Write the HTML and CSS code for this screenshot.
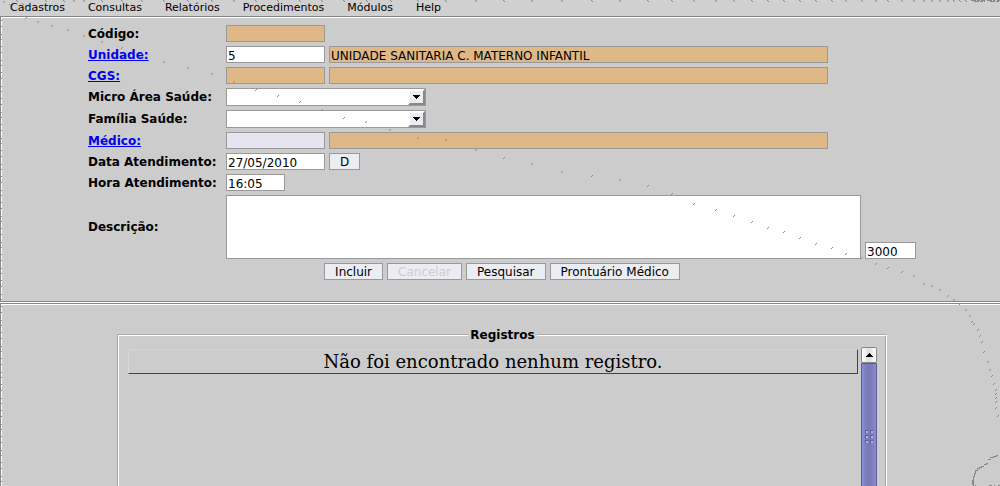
FILE: index.html
```html
<!DOCTYPE html>
<html lang="pt-BR">
<head>
<meta charset="utf-8">
<title>Atendimento</title>
<link rel="stylesheet" href="styles.css">
</head>
<body>
<nav class="menubar">
  <button type="button">Cadastros</button>
  <button type="button">Consultas</button>
  <button type="button">Relatórios</button>
  <button type="button">Procedimentos</button>
  <button type="button">Módulos</button>
  <button type="button">Help</button>
</nav>
<main class="frame">
  <form class="form">
    <div class="fields">
      <label for="codigo">Código:</label>
      <div class="row"><input id="codigo" class="locked short" readonly></div>
      <a href="#unidade">Unidade:</a>
      <div class="row"><input id="unidade" class="short" aria-label="Unidade" value="5"><input class="locked long" aria-label="Nome da unidade" readonly value="UNIDADE SANITARIA C. MATERNO INFANTIL"></div>
      <a href="#cgs">CGS:</a>
      <div class="row"><input id="cgs" class="locked short" aria-label="CGS" readonly><input class="locked long" aria-label="Nome do paciente" readonly></div>
      <label for="micro">Micro Área Saúde:</label>
      <div class="picker"><select id="micro"><option></option></select><span class="drop"><svg width="7" height="4" viewBox="0 0 7 4" aria-hidden="true"><path d="M0 0h7v1H6v1H5v1H4v1H3V3H2V2H1V1H0z"/></svg></span></div>
      <label for="familia">Família Saúde:</label>
      <div class="picker"><select id="familia"><option></option></select><span class="drop"><svg width="7" height="4" viewBox="0 0 7 4" aria-hidden="true"><path d="M0 0h7v1H6v1H5v1H4v1H3V3H2V2H1V1H0z"/></svg></span></div>
      <a href="#medico">Médico:</a>
      <div class="row"><input id="medico" class="current short" aria-label="Médico"><input class="locked long" aria-label="Nome do médico" readonly></div>
      <label for="data">Data Atendimento:</label>
      <div class="row"><input id="data" class="short" value="27/05/2010"><button type="button" class="btn">D</button></div>
      <label for="hora">Hora Atendimento:</label>
      <div class="row"><input id="hora" class="time" value="16:05"></div>
      <label for="descricao">Descrição:</label>
      <div class="row"><textarea id="descricao"></textarea><input class="count" aria-label="Caracteres restantes" value="3000"></div>
    </div>
    <div class="actions">
      <button type="button" class="btn">Incluir</button>
      <button type="button" class="btn" disabled>Cancelar</button>
      <button type="button" class="btn">Pesquisar</button>
      <button type="button" class="btn">Prontuário Médico</button>
    </div>
  </form>
</main>
<section class="frame results">
  <fieldset>
    <legend>Registros</legend>
    <div class="list">
      <p class="empty">Não foi encontrado nenhum registro.</p>
      <div class="scrollbar">
        <button type="button" class="up" aria-label="Rolar para cima"><svg width="7" height="4" viewBox="0 0 7 4" aria-hidden="true"><path d="M3 0h1v1h1v1h1v1h1v1H0V3h1V2h1V1h1z"/></svg></button>
        <div class="thumb">
          <svg width="8" height="13" viewBox="0 0 8 13" aria-hidden="true"><path fill="#5c5c9c" d="M0 0h3v3H0zM5 0h3v3H5zM0 5h3v3H0zM5 5h3v3H5zM0 10h3v3H0zM5 10h3v3H5z"/><path fill="#b0b0f0" d="M1 1h2v2H1zM6 1h2v2H6zM1 6h2v2H1zM6 6h2v2H6zM1 11h2v2H1zM6 11h2v2H6z"/></svg>
        </div>
      </div>
    </div>
  </fieldset>
</section>
<svg class="trail" width="1000" height="486" viewBox="0 0 1000 486" aria-hidden="true">
  <defs>
    <marker id="tick" markerUnits="userSpaceOnUse" markerWidth="2" markerHeight="2"><path d="M0 1h1v1H0zM1 0h1v1H1z"/></marker>
    <marker id="back" markerUnits="userSpaceOnUse" markerWidth="2" markerHeight="2"><path d="M0 0h1v1H0zM1 1h1v1H1z"/></marker>
  </defs>
  <polyline class="ticks" points="25,17 37,21 51,25 67,29 83,35 101,41 121,47 141,53 163,61 187,67 211,73 233,81 255,89 277,95 299,101 321,109 343,117 365,121 389,129 417,137 445,139 475,149 503,157 531,163 561,171 591,175 619,179 647,185 671,193 693,203 715,209 733,215 751,221 767,227 783,231 799,237 815,243 831,247 845,253 861,257 875,263 887,267 901,271 913,275 923,283 931,285 939,289 947,295 953,299 959,303 965,309 969,315 971,321 973,323 977,329 979,335 981,341 983,351 987,361 989,369 991,375 993,383 995,389 995,393 995,397 995,401 995,407 997,415"/>
  <polyline class="backs" points="3,1 9,4 16,0 22,3 28,6 45,0 63,0 73,0 83,0 101,0 121,0 141,0 163,0 187,0 211,0 233,0 255,0 277,0 299,0 321,0 343,0 366,0 390,0 417,0 445,0 475,0 503,0 531,0 561,0 591,0 619,0 647,0 671,0 693,0 715,0 733,0 751,0 767,0 783,0 799,0 815,0 831,0 845,0 861,0 875,0 887,0 901,0 913,0 923,0 931,0 939,0 947,0 953,0 959,0 965,0"/>
  <path class="edge" d="M970.500 .5h14M974 1.500h11M987 .5h8M990 1.500h10M997 .5h3" stroke-dasharray="5 1 3 1"/>
  <path class="edge" d="M998 455.500h-2v1h-3v1h-3M991 459.500h-3M988 463.500h-2v1h-2M984 466.500h-3v1h-2v1h-2v2h-2v3h-1v3h-1v4h-1v4M973 486v-6M975 485.500h1M989 485.500h3M994 485.500h1M998 485.500h2"/>
  <path class="edge" d="M1.500 20v466" stroke-dasharray="1 5 1 7 1 4 1 6"/>
</svg>
</body>
</html>
```
FILE: styles.css
```css
* { box-sizing: border-box; }
body {
  margin: 0;
  height: 100vh;
  display: flex;
  flex-direction: column;
  overflow: hidden;
  position: relative;
  background: #ccc;
  color: #000;
  font: 12px/15px "DejaVu Sans", sans-serif;
}
.menubar {
  display: flex;
  gap: 23px;
  height: 16px;
  padding: 0 10px;
  background: #d0d0d0;
}
.menubar button {
  border: 0;
  padding: 0;
  background: none;
  color: inherit;
  font: 11px/14px "DejaVu Sans", sans-serif;
}
.frame {
  padding-left: 3px;
  border-top: 1px solid #888;
  border-left: 1px solid #888;
  border-bottom: 1px solid #888;
  box-shadow: inset 1px 1px #fff;
}
.form { padding: 8px 0 21px; }
.fields {
  display: grid;
  grid-template-columns: 134px max-content;
  justify-content: center;
  align-items: center;
  gap: 4px;
}
.fields label, .fields a { font-weight: bold; line-height: 16px; }
.fields a { color: #00e; }
.row { display: flex; gap: 4px; align-items: flex-end; }
input, textarea, select {
  margin: 0;
  border: 1px solid #999;
  border-radius: 0;
  background: #fff;
  color: #000;
  font: 12px/15px "DejaVu Sans", sans-serif;
}
input { height: 17px; padding: 2px 1px 0; }
.short { width: 99px; }
.long { width: 499px; }
.time { width: 59px; }
.count { width: 51px; }
.locked { background: #deb887; }
.current { background: #e6e4f1; }
textarea { display: block; width: 635px; height: 64px; resize: none; }
.picker { display: grid; width: 200px; }
.picker select { grid-area: 1 / 1; height: 18px; appearance: none; }
.drop {
  grid-area: 1 / 1;
  justify-self: end;
  display: grid;
  place-items: center;
  width: 17px;
  height: 16px;
  margin: 1px 1px 0 0;
  border: 2px solid;
  border-color: #fff #888 #888 #fff;
  background: #ebedf2;
  pointer-events: none;
}
.btn {
  height: 17px;
  padding: 1px 10px 0;
  border: 1px solid #999;
  background: #ebedf2;
  color: #000;
  font: 12px/15px "DejaVu Sans", sans-serif;
}
.btn:disabled { color: #ccc; }
.actions { display: flex; justify-content: center; gap: 4px; padding-top: 4px; }
.results {
  flex: 1;
  min-height: 0;
  margin-top: 1px;
  padding-top: 23px;
  overflow: hidden;
  border-bottom: 0;
  box-shadow: inset 1px 1px #fff, 0 -1px #fff;
}
fieldset {
  min-width: 0;
  margin: 0 113px;
  padding: 4px 8px 0 9px;
  border: 2px groove #fff;
}
legend { margin: 0 auto; padding: 1px 2px 0; font-weight: bold; }
.list { display: flex; gap: 3px; height: 400px; }
.empty {
  flex: 1;
  align-self: flex-start;
  margin: 2px 0 0;
  border: 1px solid;
  border-color: #d6d6d6 #444 #444 #d6d6d6;
  font: 18px/23px "DejaVu Serif", serif;
  text-align: center;
}
.scrollbar { display: flex; flex-direction: column; width: 16px; }
.up {
  display: grid;
  place-items: center;
  height: 16px;
  padding: 0;
  border: 1px solid #888;
  border-radius: 2px;
  background: linear-gradient(90deg, #fff, #ddd 50%, #fff);
}
.thumb {
  flex: 1;
  padding: 66px 3px 0;
  border: 1px solid #5c5c94;
  background: linear-gradient(90deg, #9090e8, #8080c4 20%, #7878b4 50%, #8080c4 80%, #8c8cdc);
}
.thumb svg { display: block; }
.trail { position: absolute; top: 0; left: 0; pointer-events: none; shape-rendering: crispEdges; }
.trail marker path { fill: #888; }
.ticks, .backs { fill: none; }
.ticks { marker: url(#tick); }
.backs { marker: url(#back); }
.edge { fill: none; stroke: #888; }
```
